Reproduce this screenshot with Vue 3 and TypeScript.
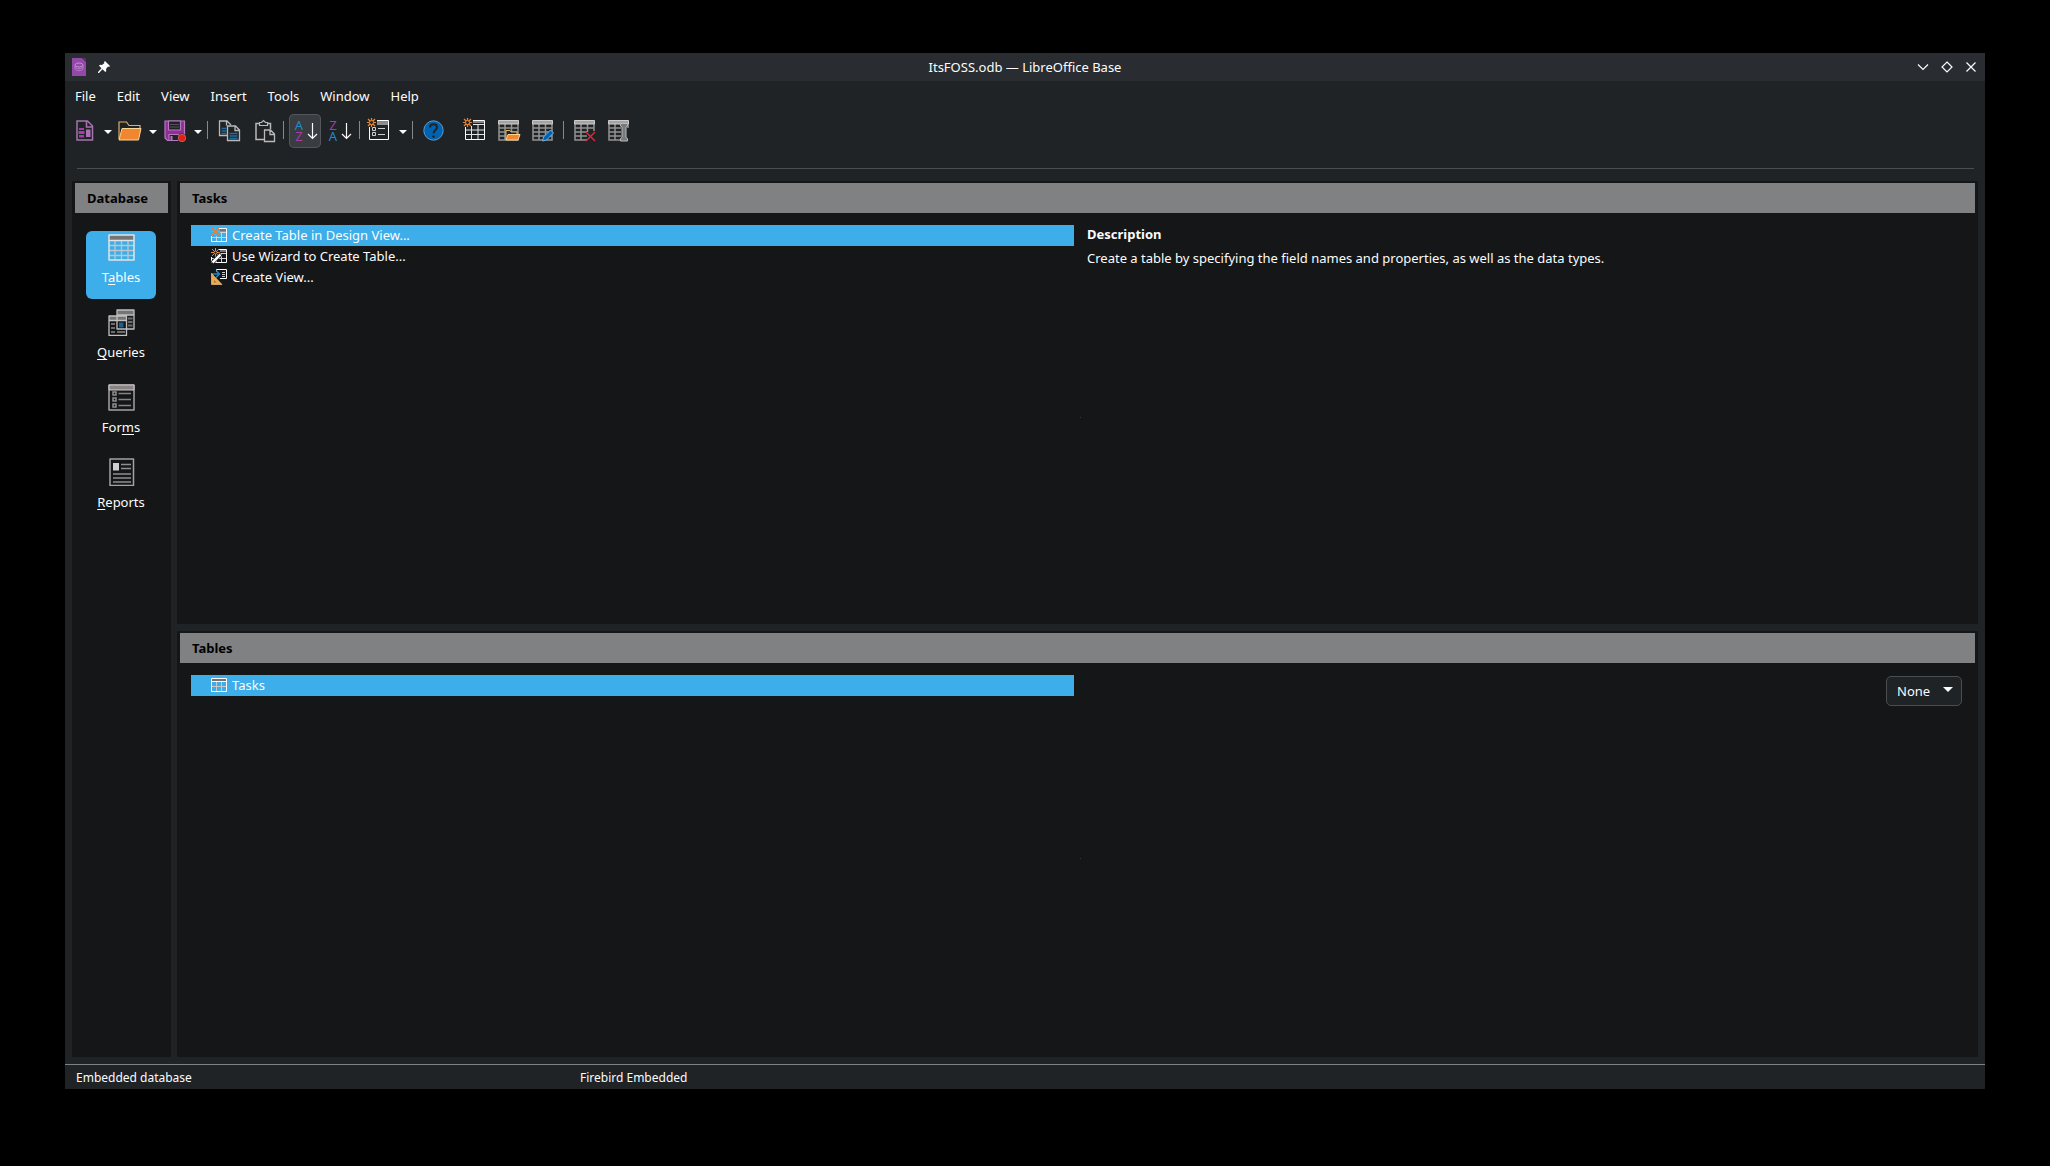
<script setup lang="ts">
import { ref } from 'vue'

interface Task {
  label: string
  icon: 'design' | 'wizard' | 'view'
  description: string
}

interface Section {
  before: string
  key: string
  after: string
  icon: 'tables' | 'queries' | 'forms' | 'reports'
}

const menus: string[] = ['File', 'Edit', 'View', 'Insert', 'Tools', 'Window', 'Help']

const sections: Section[] = [
  { before: 'T', key: 'a', after: 'bles', icon: 'tables' },
  { before: '', key: 'Q', after: 'ueries', icon: 'queries' },
  { before: 'For', key: 'm', after: 's', icon: 'forms' },
  { before: '', key: 'R', after: 'eports', icon: 'reports' },
]

const tasks: Task[] = [
  {
    label: 'Create Table in Design View...',
    icon: 'design',
    description: 'Create a table by specifying the field names and properties, as well as the data types.',
  },
  { label: 'Use Wizard to Create Table...', icon: 'wizard', description: '' },
  { label: 'Create View...', icon: 'view', description: '' },
]

const activeSection = ref(0)
const activeTask = ref(0)
const preview = ref('None')
</script>

<template>
  <div class="desktop">
    <div class="window">
      <header class="titlebar">
        <div class="window-menu">
          <svg width="14" height="18" viewBox="0 0 14 18" aria-hidden="true">
            <path d="M0 0h10l4 4v14H0z" fill="#9249a8" />
            <path d="M10 0h4v4z" fill="#5c2c6c" />
            <ellipse cx="7" cy="7" rx="4" ry="2" fill="none" stroke="#c58fd3" />
            <path d="M3 7v4c1 2 7 2 8 0V7M3 9c1 2 7 2 8 0" fill="none" stroke="#b878c8" />
          </svg>
          <button type="button" aria-label="Pin window">
            <svg width="12" height="12" viewBox="0 0 12 12">
              <path d="M7 0l5 5-1 1-1-.4L8 8l.3 2-1 1L4.500 8.200 1 12H0v-1l3.500-3.700L1 4.700l1-1 2 .2L6.400 2 6 1z" fill="#fcfcfc" />
            </svg>
          </button>
        </div>
        <h1 class="title">ItsFOSS.odb — LibreOffice Base</h1>
        <div class="window-buttons">
          <button type="button" aria-label="Minimize">
            <svg width="14" height="14" viewBox="0 0 14 14"><path d="M2 4.500l5 5 5-5" /></svg>
          </button>
          <button type="button" aria-label="Maximize">
            <svg width="14" height="14" viewBox="0 0 14 14"><path d="M7 2l5 5-5 5-5-5z" /></svg>
          </button>
          <button type="button" aria-label="Close">
            <svg width="14" height="14" viewBox="0 0 14 14"><path d="M2.500 2.500l9 9M11.500 2.500l-9 9" /></svg>
          </button>
        </div>
      </header>

      <nav class="menubar">
        <button v-for="menu in menus" :key="menu" type="button">{{ menu }}</button>
      </nav>

      <div class="toolbar" role="toolbar" aria-label="Standard">
        <button class="tool" type="button" aria-label="New">
          <svg width="34" height="34" viewBox="0 0 34 34" fill="none">
            <path d="M9 7h10.500l5 5v14H9zM18.500 7v6h6" stroke="#a871b2" stroke-width="1.500" />
            <path d="M11 14h5v2h-5zM10.500 17h6v3h-6zM11 21h5v2.500h-5z" fill="#a63bab" />
            <path d="M18 15.500h4.500V23H18z" fill="#a871b2" />
          </svg>
        </button>
        <button class="drop" type="button" aria-label="New options"><i></i></button>
        <button class="tool" type="button" aria-label="Open">
          <svg width="34" height="34" viewBox="0 0 34 34" fill="none">
            <path d="M6 25V8h7.500l2.500 3.500h11V15" stroke="#d8b26a" stroke-width="1.200" />
            <path d="M9 14.500h19L25.500 26H6z" fill="#f08630" stroke="#fad594" />
          </svg>
        </button>
        <button class="drop" type="button" aria-label="Open options"><i></i></button>
        <button class="tool" type="button" aria-label="Save">
          <svg width="34" height="34" viewBox="0 0 34 34" fill="none">
            <path d="M7 7h19.500v19.500H9.500L7 24z" fill="#8e2f96" stroke="#b57abd" stroke-width="1.200" />
            <path d="M10.500 7h12v9h-12z" fill="#202326" stroke="#b57abd" stroke-width="1.200" />
            <path d="M12 10.500h9M12 13h9" stroke="#55505a" />
            <path d="M11 20.500h9.500v6H11z" fill="#202326" stroke="#b57abd" stroke-width="1.200" />
            <path d="M13.500 22v4" stroke="#b57abd" stroke-width="2" />
            <circle cx="24" cy="24" r="4.500" fill="#202326" />
            <circle cx="24" cy="24" r="3.700" fill="#e0211a" stroke="#f47a70" stroke-width=".6" />
          </svg>
        </button>
        <button class="drop" type="button" aria-label="Save options"><i></i></button>
        <span class="sep"></span>
        <button class="tool" type="button" aria-label="Copy">
          <svg width="34" height="34" viewBox="0 0 34 34" fill="none">
            <path d="M16 21.500H8.500V7H16l4 4M15.500 7v4.500" stroke="#b9b9b9" stroke-width="1.300" />
            <path d="M10.500 14.500h5M10.500 17h5M10.500 19.500h5" stroke="#1f6c9e" stroke-width="1.500" />
            <path d="M16.500 12h8l4 4v10.500h-12zM24 12v4.500h4.500" fill="#202326" stroke="#b9b9b9" stroke-width="1.300" />
            <path d="M18.500 19.500h8M18.500 22h8M18.500 24.500h8" stroke="#1f6c9e" stroke-width="1.500" />
          </svg>
        </button>
        <button class="tool" type="button" aria-label="Paste">
          <svg width="34" height="34" viewBox="0 0 34 34" fill="none">
            <path d="M19 25.500h-8V9.500h14.500V15" stroke="#b9b9b9" stroke-width="1.500" />
            <path d="M14.500 11.500V8.500h2l2-2 2 2h2v3z" fill="#202326" stroke="#b9b9b9" stroke-width="1.200" />
            <path d="M19.500 16h6l4 4v7.500h-10zM25 16v4.500h4.500" fill="#202326" stroke="#b9b9b9" stroke-width="1.300" />
          </svg>
        </button>
        <span class="sep"></span>
        <button class="tool pressed" type="button" aria-label="Sort Ascending" aria-pressed="true">
          <svg width="32" height="34" viewBox="2 0 32 34" fill="none">
            <text x="12" y="16" fill="#1e8bcd">A</text>
            <text x="12" y="27" fill="#a63bab">Z</text>
            <path d="M25.500 9v15M21 20l4.500 4.500L30 20" stroke="#fcfcfc" stroke-width="1.200" />
          </svg>
        </button>
        <button class="tool" type="button" aria-label="Sort Descending">
          <svg width="34" height="34" viewBox="0 0 34 34" fill="none">
            <text x="12" y="16" fill="#a63bab">Z</text>
            <text x="12" y="27" fill="#1e8bcd">A</text>
            <path d="M25.500 9v15M21 20l4.500 4.500L30 20" stroke="#fcfcfc" stroke-width="1.200" />
          </svg>
        </button>
        <span class="sep"></span>
        <button class="tool" type="button" aria-label="Form">
          <svg width="34" height="34" viewBox="0 0 34 34" fill="none">
            <path d="M6.500 13v12.500h19v-19H14" stroke="#fcfcfc" />
            <path d="M14 7h11v2H14z" fill="#8a8686" />
            <path d="M14 10h11" stroke="#fcfcfc" />
            <path d="M9.500 13.500h3v3h-3zM9.500 18.500h3v3h-3z" stroke="#d0d0d0" />
            <path d="M15 14.500h7M15 20.500h7" stroke="#d0d0d0" />
            <path d="M8.500 4v9M4 8.500h9M5 5l7 7M12 5l-7 7" stroke="#f08630" stroke-width="1.200" />
            <circle cx="8.500" cy="8.500" r="2" fill="#202326" stroke="#f08630" />
          </svg>
        </button>
        <button class="drop" type="button" aria-label="Form options"><i></i></button>
        <span class="sep"></span>
        <button class="tool" type="button" aria-label="Help">
          <svg width="34" height="34" viewBox="0 0 34 34" fill="none">
            <circle cx="17.500" cy="16.500" r="9.700" fill="#0063b1" stroke="#5f9bc9" />
            <path d="M14 13.500c0-4.500 7-4.500 7 0 0 2.500-3.500 2.500-3.500 6" stroke="#202326" stroke-width="2" />
            <circle cx="17.500" cy="22.500" r="1.300" fill="#202326" />
          </svg>
        </button>
        <span class="gap"></span>
        <button class="tool" type="button" aria-label="New Table Design">
          <svg width="34" height="34" viewBox="0 0 34 34" fill="none">
            <path d="M8.500 13v12.500h19v-19H16" stroke="#fcfcfc" />
            <path d="M16 7h11v2H16z" fill="#8a8686" />
            <path d="M16 10.500h11M9 16h18M9 20.500h18M14.500 12v13M21 11v14" stroke="#e4e4e4" />
            <path d="M10.500 4v9M6 8.500h9M7 5l7 7M14 5l-7 7" stroke="#f08630" stroke-width="1.200" />
            <circle cx="10.500" cy="8.500" r="2" fill="#202326" stroke="#f08630" />
          </svg>
        </button>
        <button class="tool" type="button" aria-label="Open Database Object">
          <svg width="34" height="34" viewBox="0 0 34 34" fill="none">
            <path class="grid" d="M8 10v16h19V10M8 14h19M8 18h19M8 22h19M14 10v16M20.500 10v16" />
            <path d="M7.500 6.500h20V10h-20z" fill="#a5a2a2" stroke="#cfcccc" />
            <path d="M15 26V16.500h4l1 1.500h6v2" fill="#202326" stroke="#e2b45c" />
            <path d="M17 20.500h12L27 26H15z" fill="#f08630" stroke="#fad594" />
          </svg>
        </button>
        <button class="tool" type="button" aria-label="Edit">
          <svg width="34" height="34" viewBox="0 0 34 34" fill="none">
            <path class="grid" d="M8 10v16h19V10M8 14h19M8 18h19M8 22h19M14 10v16M20.500 10v16" />
            <path d="M7.500 6.500h20V10h-20z" fill="#a5a2a2" stroke="#cfcccc" />
            <path d="M17.500 27l1-4 7-7 3 3-7 7z" fill="#0063b1" stroke="#6db3e6" />
          </svg>
        </button>
        <span class="sep"></span>
        <button class="tool" type="button" aria-label="Delete">
          <svg width="34" height="34" viewBox="0 0 34 34" fill="none">
            <path class="grid" d="M20 26H8V10M27 10v7M8 14h19M8 18h12M8 22h12M14 10v16M20.500 10v8" />
            <path d="M7.500 6.500h20V10h-20z" fill="#a5a2a2" stroke="#cfcccc" />
            <path d="M19 18l9 9M28 18l-9 9" stroke="#d6303a" stroke-width="1.300" />
          </svg>
        </button>
        <button class="tool" type="button" aria-label="Rename">
          <svg width="34" height="34" viewBox="0 0 34 34" fill="none">
            <path class="grid" d="M20 26H8V10M27 10v4M8 14h12M8 18h12M8 22h12M14 10v16" />
            <path d="M7.500 6.500h20V10h-20z" fill="#a5a2a2" stroke="#cfcccc" />
            <path d="M19.500 9.500h7V12l-1.500 1v10.500l1.500 1V27h-7v-2.500l1.500-1V13l-1.500-1z" fill="#77797b" stroke="#b9b9b9" />
          </svg>
        </button>
      </div>

      <hr class="rule" />

      <main class="workspace">
        <aside class="panel sidebar">
          <h2 class="heading">Database</h2>
          <nav class="sections">
            <button
              v-for="(section, index) in sections"
              :key="section.icon"
              type="button"
              :class="{ active: index === activeSection }"
              @click="activeSection = index"
            >
              <svg v-if="section.icon === 'tables'" width="28" height="28" viewBox="0 0 28 28" fill="none">
                <path d="M8 8v19M14.500 8v19M21 8v19M2 12.500h25M2 17.500h25M2 22.500h25" stroke="#bcc6cc" stroke-width="1.300" />
                <path d="M2 2h25v5.500H2z" fill="#777475" />
                <path d="M2 2h25v25H2zM2 7.500h25" stroke="#dfe5e8" stroke-width="1.500" stroke-linejoin="round" />
              </svg>
              <svg v-else-if="section.icon === 'queries'" width="28" height="28" viewBox="0 0 28 28" fill="none">
                <path d="M10 2h17v19H10z" fill="#1b1d1f" />
                <path d="M10 2h17v5H10z" fill="#777475" />
                <path d="M21 10.500h4.500M21 14h4.500M21 17.500h4.500" stroke="#6d6d6d" stroke-width="2" />
                <path d="M2 8h17.500v19.500H2z" fill="#141618" />
                <path d="M2 8h17.500v4.500H2z" fill="#777475" />
                <path d="M4 16h4M4 20h4M4 24h4M10 24h8" stroke="#6d6d6d" stroke-width="2" />
                <path d="M12 14.500h4.500v5H12z" fill="#1f5f8c" />
                <path d="M10 2h17v19H10zM10 7h17M2 8h17.500v19.500H2zM2 12.500h17.500" stroke="#c0c0c0" stroke-width="1.300" stroke-linejoin="round" />
              </svg>
              <svg v-else-if="section.icon === 'forms'" width="28" height="28" viewBox="0 0 28 28" fill="none">
                <path d="M2 2h25v25H2z" stroke="#a3a3a3" stroke-width="1.500" stroke-linejoin="round" />
                <path d="M2 2h25v5H2z" fill="#8a8383" stroke="#cfcaca" />
                <path d="M6 9h3v3H6zM6 15h3v3H6zM6 21h3v3H6z" stroke="#8f8f8f" stroke-width="1.500" />
                <path d="M11.500 10.500h12.500M11.500 16.500h12.500M11.500 22.500h12.500" stroke="#858585" stroke-width="1.500" />
              </svg>
              <svg v-else width="28" height="28" viewBox="0 0 28 28" fill="none">
                <path d="M3 1h23.500v26.500H3z" stroke="#a3a3a3" stroke-width="1.500" stroke-linejoin="round" />
                <path d="M6 5h6v7.500H6z" fill="#d0cece" />
                <path d="M14 6.500h10M14 10.500h10M6 16h18M6 20h18M6 24h18" stroke="#8f8f8f" stroke-width="1.500" />
              </svg>
              <span>{{ section.before }}<u>{{ section.key }}</u>{{ section.after }}</span>
            </button>
          </nav>
        </aside>

        <div class="content">
          <section class="panel tasks">
            <h2 class="heading">Tasks</h2>
            <div class="split">
              <ul class="list">
                <li v-for="(task, index) in tasks" :key="task.label">
                  <button type="button" :class="{ selected: index === activeTask }" @click="activeTask = index">
                    <svg v-if="task.icon === 'view'" width="16" height="16" viewBox="0 0 16 16" fill="none">
                      <path d="M5.500 3V.5h10v9H9" stroke="#fcfcfc" />
                      <path d="M11 3.500h3M11 5.500h3M11 7.500h3" stroke="#c8c8c8" />
                      <path d="M0 5h8M5 1.500L8.500 5 5 8.500" stroke="#1e8bcd" stroke-width="1.300" />
                      <path d="M.5 4.500v11h10.500z" fill="#f0a850" stroke="#fad594" stroke-width=".6" />
                      <path d="M3 11v2.500h2.500z" fill="#b06a20" />
                    </svg>
                    <svg v-else width="16" height="16" viewBox="0 0 16 16" fill="none">
                      <path d="M.5 9v5.500h15v-13H8" stroke="#fcfcfc" />
                      <path d="M9 2h6v2H9z" fill="#777475" />
                      <path d="M9 5.500h6M1 10.500h14M5.500 9v5M10.500 5v9" stroke="#c9d3d8" />
                      <path d="M4.500 0v9M0 4.500h9M1 1l7 7M8 1L1 8" stroke="#f08630" />
                      <circle cx="4.500" cy="4.500" r="1.500" :fill="index === activeTask ? '#3daee9' : '#141618'" stroke="#f08630" />
                      <template v-if="task.icon === 'wizard'">
                        <path d="M1 15L10 6" stroke="#141618" stroke-width="4" />
                        <path d="M1.500 14.500l8-8" stroke="#fcfcfc" stroke-width="2.500" />
                      </template>
                    </svg>
                    <span>{{ task.label }}</span>
                  </button>
                </li>
              </ul>
              <div class="splitter"></div>
              <div class="description">
                <h3>Description</h3>
                <p>{{ tasks[activeTask].description }}</p>
              </div>
            </div>
          </section>

          <section class="panel objects">
            <h2 class="heading">Tables</h2>
            <div class="split">
              <ul class="list">
                <li>
                  <button type="button" class="selected">
                    <svg width="16" height="16" viewBox="0 0 16 16" fill="none">
                      <path d="M1 2h14v2H1z" fill="#777475" />
                      <path d="M5.500 5v9M10.500 5v9M1 9.500h14" stroke="#c9c9c9" />
                      <path d="M.5 1.500h15v13H.5zM1 4.500h14" stroke="#fcfcfc" />
                    </svg>
                    <span>Tasks</span>
                  </button>
                </li>
              </ul>
              <div class="splitter"></div>
              <div class="preview">
                <label class="combo">
                  <select v-model="preview" aria-label="Preview">
                    <option>None</option>
                    <option>Document Information</option>
                    <option>Document</option>
                  </select>
                  <i></i>
                </label>
              </div>
            </div>
          </section>
        </div>
      </main>

      <footer class="statusbar">
        <span>Embedded database</span>
        <span>Firebird Embedded</span>
      </footer>
    </div>
  </div>
</template>

<style>
body {
  background: #000;
}
</style>

<style scoped>
* {
  box-sizing: border-box;
}

.desktop {
  display: flex;
  min-height: 100vh;
  padding: 53px 65px 77px;
  background: #000;
  color: #fcfcfc;
  font: 13px/18px "Noto Sans", sans-serif;
}

.window {
  flex: 1;
  min-width: 0;
  display: flex;
  flex-direction: column;
  background: #202326;
}

h1,
h2,
h3,
p,
ul {
  margin: 0;
  padding: 0;
  font: inherit;
  list-style: none;
}

button {
  margin: 0;
  padding: 0;
  border: 0;
  background: none;
  color: inherit;
  font: inherit;
}

svg {
  display: block;
  flex: none;
}

.titlebar {
  display: grid;
  grid-template-columns: 1fr auto 1fr;
  align-items: center;
  height: 28px;
  background: #292c30;
}

.window-menu {
  display: flex;
  align-items: center;
  gap: 12px;
  padding-left: 7px;
}

.window-buttons {
  display: flex;
  justify-content: flex-end;
  padding-right: 2px;
}

.window-buttons button {
  display: flex;
  justify-content: center;
  align-items: center;
  width: 24px;
  height: 28px;
}

.window-buttons path {
  fill: none;
  stroke: #fcfcfc;
  stroke-width: 1.2;
}

.menubar {
  display: flex;
  height: 30px;
  margin-bottom: 3px;
}

.menubar button {
  padding: 0 11px 0 10px;
}

.toolbar {
  display: flex;
  height: 34px;
  padding-left: 3px;
}

.tool {
  width: 34px;
}

.tool.pressed {
  width: 32px;
  margin-left: 2px;
  border-radius: 5px;
  background: #393c40;
  box-shadow: inset 0 0 0 1px #53565a;
}

.tool text {
  font: 13px "Noto Sans", sans-serif;
  text-anchor: middle;
}

.grid {
  stroke: #929292;
  stroke-width: 1.5;
}

.drop {
  display: flex;
  justify-content: center;
  align-items: center;
  width: 11px;
}

.drop i {
  margin-top: 2px;
  border: 4px solid transparent;
  border-top-color: #fcfcfc;
  border-bottom-width: 0;
}

.sep {
  width: 1px;
  height: 18px;
  margin: 7px 3px 0 4px;
  background: #85888a;
}

.gap {
  width: 7px;
}

.rule {
  width: auto;
  height: 1px;
  margin: 20px 11px 12px 12px;
  border: 0;
  background: #4b4e51;
}

.workspace {
  flex: 1;
  display: flex;
  gap: 6px;
  margin: 0 7px;
}

.panel {
  display: flex;
  flex-direction: column;
  padding: 2px 3px;
  background: #141618;
}

.sidebar {
  width: 99px;
}

.heading {
  height: 30px;
  padding-left: 12px;
  background: #808183;
  color: #000;
  font-weight: 700;
  line-height: 31px;
}

.sections {
  display: flex;
  flex-direction: column;
  gap: 7px;
  margin: 18px 12px 0 11px;
}

.sections button {
  display: flex;
  flex-direction: column;
  align-items: center;
  gap: 7px;
  height: 68px;
  padding-top: 2px;
  border-radius: 6px;
}

.sections .active {
  background: #3daee9;
}

.sections u {
  text-underline-offset: 2px;
  text-decoration-thickness: 1px;
  text-decoration-skip-ink: none;
}

.content {
  flex: 1;
  min-width: 0;
  display: flex;
  flex-direction: column;
  gap: 7px;
}

.tasks {
  flex: 443 1 0;
}

.objects {
  flex: 426 1 0;
}

.split {
  flex: 1;
  display: grid;
  grid-template-columns: 1fr 7px 1fr;
  margin-right: -3px;
  margin-left: -3px;
}

.list {
  padding: 12px 0 0 14px;
}

.list button {
  display: flex;
  align-items: center;
  gap: 5px;
  width: 100%;
  height: 21px;
  padding: 0 0 1px 20px;
  text-align: left;
}

.list .selected {
  background: #3daee9;
}

.splitter {
  display: flex;
  justify-content: flex-end;
  align-items: center;
}

.splitter::after {
  content: "";
  width: 1px;
  height: 1px;
  background: #35383b;
}

.description {
  padding: 12px 6px 0;
}

.description h3 {
  margin-bottom: 6px;
  font-weight: 700;
}

.preview {
  display: flex;
  justify-content: flex-end;
  align-items: flex-start;
  padding: 13px 16px 0 0;
}

.combo {
  position: relative;
}

.combo select {
  appearance: none;
  width: 76px;
  height: 30px;
  padding: 0 10px;
  border: 1px solid #4b4e51;
  border-radius: 5px;
  background: #202326;
  color: inherit;
  font: inherit;
}

.combo i {
  position: absolute;
  top: 11px;
  right: 9px;
  border: 5px solid transparent;
  border-top-color: #fcfcfc;
  border-bottom-width: 0;
  pointer-events: none;
}

.statusbar {
  display: flex;
  height: 25px;
  margin-top: 7px;
  padding-left: 11px;
  border-top: 1px solid #7f8283;
  font-size: 12px;
  line-height: 26px;
}

.statusbar span:first-child {
  width: 26.4%;
}
</style>
